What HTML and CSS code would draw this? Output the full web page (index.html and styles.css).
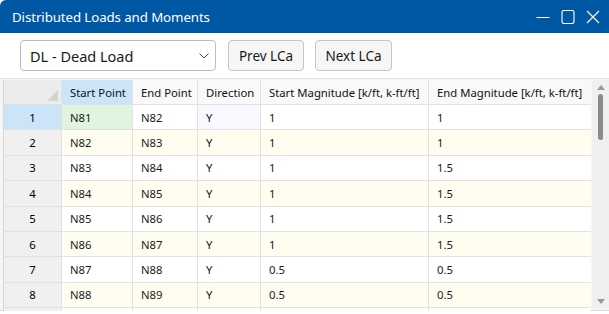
FILE: index.html
```html
<!DOCTYPE html>
<html lang="en">
<head>
  <meta charset="UTF-8" />
  <title>Distributed Loads and Moments</title>
  <link rel="stylesheet" href="styles.css">
</head>
<body>

<div class="window">
  <div class="title-bar">
    <span class="title">Distributed Loads and Moments</span>
    <div class="win-controls">
      <svg width="14" height="14" viewBox="0 0 14 14"><path d="M0.5 7.5h13" stroke="#fff" stroke-width="1" fill="none"/></svg>
      <svg width="14" height="14" viewBox="0 0 14 14"><rect x="1" y="0.5" width="12" height="13" rx="2" stroke="#fff" stroke-width="1.1" fill="none"/></svg>
      <svg width="14" height="14" viewBox="0 0 14 14"><path d="M1 1l12 12M13 1l-12 12" stroke="#fff" stroke-width="1.1" fill="none"/></svg>
    </div>
  </div>

  <div class="toolbar">
    <div class="select">
      <span>DL - Dead Load</span>
      <svg width="10" height="6" viewBox="0 0 10 6"><path d="M0.5 0.5l4.5 4.5 4.5-4.5" stroke="#444" stroke-width="1" fill="none"/></svg>
    </div>
    <button type="button" class="btn btn-prev">Prev LCa</button>
    <button type="button" class="btn btn-next">Next LCa</button>
  </div>

  <div class="grid-wrap">
    <div class="grid-clip">
      <table class="grid">
        <colgroup>
          <col class="c-row" />
          <col class="c-start" />
          <col class="c-end" />
          <col class="c-dir" />
          <col class="c-smag" />
          <col class="c-emag" />
        </colgroup>
        <thead>
          <tr>
            <th class="corner"><span class="corner-mark"></span></th>
            <th class="active-col">Start Point</th>
            <th>End Point</th>
            <th>Direction</th>
            <th>Start Magnitude [k/ft, k-ft/ft]</th>
            <th>End Magnitude [k/ft, k-ft/ft]</th>
          </tr>
        </thead>
        <tbody>
          <tr class="selected">
            <td class="row-head">1</td><td class="current">N81</td><td>N82</td><td class="dir-hl">Y</td><td>1</td><td>1</td>
          </tr>
          <tr class="alt">
            <td class="row-head">2</td><td>N82</td><td>N83</td><td>Y</td><td>1</td><td>1</td>
          </tr>
          <tr>
            <td class="row-head">3</td><td>N83</td><td>N84</td><td>Y</td><td>1</td><td>1.5</td>
          </tr>
          <tr class="alt">
            <td class="row-head">4</td><td>N84</td><td>N85</td><td>Y</td><td>1</td><td>1.5</td>
          </tr>
          <tr>
            <td class="row-head">5</td><td>N85</td><td>N86</td><td>Y</td><td>1</td><td>1.5</td>
          </tr>
          <tr class="alt">
            <td class="row-head">6</td><td>N86</td><td>N87</td><td>Y</td><td>1</td><td>1.5</td>
          </tr>
          <tr>
            <td class="row-head">7</td><td>N87</td><td>N88</td><td>Y</td><td>0.5</td><td>0.5</td>
          </tr>
          <tr class="alt">
            <td class="row-head">8</td><td>N88</td><td>N89</td><td>Y</td><td>0.5</td><td>0.5</td>
          </tr>
          <tr>
            <td class="row-head"></td><td></td><td></td><td></td><td></td><td></td>
          </tr>
        </tbody>
      </table>
    </div>

    <div class="scrollbar">
      <span class="arrow up"></span>
      <span class="thumb"></span>
      <span class="arrow down"></span>
    </div>
  </div>
</div>

</body>
</html>
```

FILE: styles.css
```css
 html, body { margin: 0; padding: 0; background: #fff; }
 body { font-family: "Noto Sans", Arial, sans-serif; color: #1a1a1a; }

 .window { width: 609px; height: 314px; overflow: hidden; background: #fff; }

 .title-bar {
   height: 33px; background: #0057a3; color: #fff;
   display: flex; align-items: center; justify-content: space-between;
   padding: 0 9px 0 12px; border-top-left-radius: 6px;
 }
 .title { font-size: 13.3px; letter-spacing: -0.1px; }
 .win-controls { display: flex; gap: 11px; }
 .win-controls svg { display: block; }

 .toolbar {
   height: 45px; box-sizing: border-box; padding: 7px 0 0 20px;
   display: flex; align-items: flex-start;
 }
 .select {
   width: 196px; height: 31px; box-sizing: border-box;
   border: 1px solid #bdbdbd; border-radius: 4px; background: #fff;
   display: flex; align-items: center; justify-content: space-between;
   padding: 0 6px 0 9px; font-size: 14.5px; margin-right: 12px;
 }
 .btn {
   height: 31px; box-sizing: border-box; padding: 0;
   border: 1px solid #c6c6c6; border-radius: 4px; background: #f6f6f6;
   font-family: inherit; font-size: 13.5px; color: #1a1a1a; margin-right: 11px;
 }
 .btn-prev { width: 76px; }
 .btn-next { width: 77px; }

 .grid-wrap {
   display: flex; border-top: 1px solid #e3e3e3; height: 233px;
   background: #f6f6f6; padding: 1px 0 0 3px; box-sizing: border-box;
   border-bottom: 1px solid #d9d9d9;
 }
 .grid-clip { height: 231px; overflow: hidden; align-self: flex-start; }
 .grid {
   border-collapse: collapse; table-layout: fixed; width: 589px;
   font-size: 11.3px; background: #fff;
   border-left: 1px solid #d5d5d5;
 }
 .c-row { width: 58px; }
 .c-start { width: 71px; }
 .c-end { width: 65px; }
 .c-dir { width: 63px; }
 .c-smag { width: 168px; }
 .c-emag { width: 164px; }

 .grid th, .grid td {
   border-right: 1px solid #e1e1e1; border-bottom: 1px solid #e1e1e1;
   padding: 0 8px; text-align: left; white-space: nowrap; overflow: hidden;
 }
 .grid th { height: 24px; font-weight: normal; background: #f9f9f9; color: #111; }
 .grid td { height: 24.4px; }
 .grid th.corner { background: #ececec; position: relative; }
 .corner-mark {
   position: absolute; right: 3px; bottom: 3px; width: 0; height: 0;
   border-left: 11px solid transparent; border-bottom: 11px solid #d2d2d2;
 }
 .grid th.active-col { background: #cce4f7; }
 .grid td.row-head { background: #f0f0f0; text-align: center; color: #000; }
 .grid tr.alt td { background: #fffdf0; }
 .grid tr.alt td.row-head { background: #f0f0f0; }
 .grid tr.selected td.row-head { background: #cce4f7; }
 .grid td.current { background: #e0f4df; }
 .grid td.dir-hl { background: #f8f8ff; }

 .scrollbar {
   width: 17px; margin-left: 1px; height: 228px; background: #f0f0f0;
   display: flex; flex-direction: column; align-items: center;
 }
 .arrow { width: 0; height: 0; border-left: 4px solid transparent; border-right: 4px solid transparent; }
 .arrow.up { border-bottom: 5px solid #9a9a9a; margin-top: 5px; }
 .arrow.down { border-top: 5px solid #9a9a9a; margin-top: auto; margin-bottom: 4px; }
 .thumb { width: 5px; height: 46px; background: #8a8a8a; border-radius: 3px; margin-top: 4px; }
```
